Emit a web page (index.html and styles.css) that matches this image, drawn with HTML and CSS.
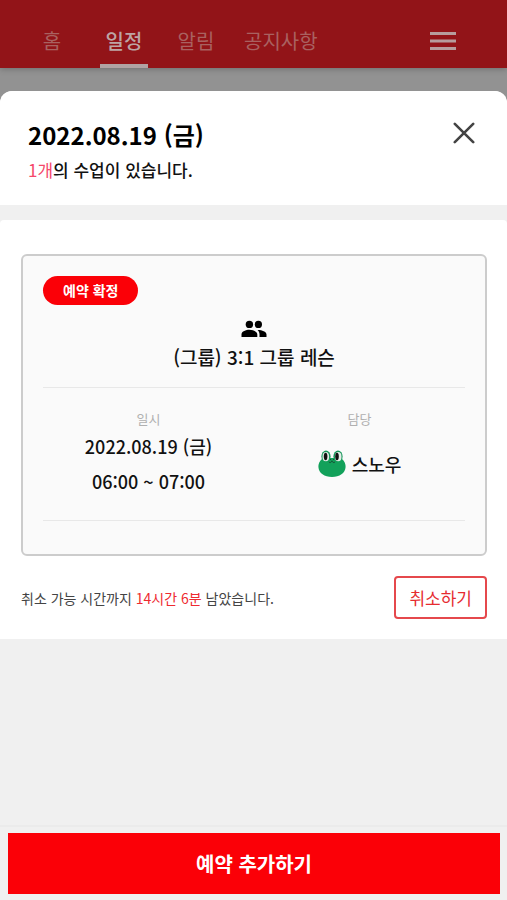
FILE: index.html
```html
<!DOCTYPE html>
<html lang="ko">
<head>
<meta charset="utf-8">
<meta name="viewport" content="width=device-width, initial-scale=1">
<title>일정</title>
<link rel="stylesheet" href="styles.css">
</head>
<body>
<div class="app">
  <header class="topbar">
    <nav class="tabs">
      <a class="tab" href="#home">홈</a>
      <a class="tab tab-active" href="#schedule" aria-current="page">일정</a>
      <a class="tab" href="#alerts">알림</a>
      <a class="tab" href="#notices">공지사항</a>
    </nav>
    <button class="icon-button menu" type="button" aria-label="메뉴">
      <svg width="26" height="18" viewBox="0 0 26 18"><path d="M0 1.5h26M0 9h26M0 16.5h26" stroke="currentColor" stroke-width="2.8"/></svg>
    </button>
  </header>
  <main class="sheet">
    <section class="summary">
      <div>
        <h1 class="date">2022.08.19 (금)</h1>
        <p class="count"><span class="count-number">1개</span>의 수업이 있습니다.</p>
      </div>
      <button class="icon-button close" type="button" aria-label="닫기">
        <svg width="22" height="22" viewBox="0 0 22 22"><path d="M1.8 1.8l18.4 18.4M20.2 1.8l-18.4 18.4" stroke="currentColor" stroke-width="2.6" stroke-linecap="round"/></svg>
      </button>
    </section>
    <section class="lessons">
      <article class="card">
        <span class="badge">예약 확정</span>
        <div class="lesson">
          <svg class="people" width="26" height="18" viewBox="0 0 26 18" fill="currentColor">
            <circle cx="8.4" cy="4.4" r="3.7"/>
            <circle cx="17.4" cy="4.4" r="3.6"/>
            <path d="M0.5 17v-2.6c0-3.1 4.5-4.6 7.9-4.6s7.9 1.5 7.9 4.6V17z"/>
            <path d="M17.2 9.9c3.6.1 8.3 1.5 8.3 4.5V17h-7v-2.6c0-1.9-.6-3.4-1.9-4.5z"/>
          </svg>
          <h2 class="lesson-name">(그룹) 3:1 그룹 레슨</h2>
        </div>
        <dl class="details">
          <div class="detail">
            <dt>일시</dt>
            <dd class="time">2022.08.19 (금)<br>06:00 ~ 07:00</dd>
          </div>
          <div class="detail">
            <dt>담당</dt>
            <dd class="coach">
              <svg width="28" height="28" viewBox="0 0 28 28">
                <ellipse cx="8" cy="6.5" rx="4.6" ry="6" fill="#16955a"/>
                <ellipse cx="20" cy="6.5" rx="4.6" ry="6" fill="#16955a"/>
                <path d="M4 9c3-1.5 17-1.5 20 0 2.6 2.4 3.8 5.200 3.600 8-.4 6.200-6.100 10-13.600 10S.8 23.200.4 17C.2 14.200 1.400 11.400 4 9z" fill="#12a15a"/>
                <ellipse cx="7.800" cy="6.700" rx="3.300" ry="4.600" fill="#e4ece6"/>
                <ellipse cx="20.200" cy="6.700" rx="3.300" ry="4.600" fill="#e4ece6"/>
                <ellipse cx="7.600" cy="6.500" rx="1.800" ry="3.700" fill="#111"/>
                <ellipse cx="19" cy="6.500" rx="1.800" ry="3.700" fill="#111"/>
                <path d="M10.800 11.800c1.400 1.600 2.700.3 3.100-1 .5 1.300 1.800 2.600 3.200 1M12 9.500h1M15 9.500h1" fill="none" stroke="#174f35" stroke-width="1"/>
              </svg>
              <span>스노우</span>
            </dd>
          </div>
        </dl>
      </article>
      <div class="cancel-row">
        <p class="deadline">취소 가능 시간까지 <span class="deadline-time">14시간 6분</span> 남았습니다.</p>
        <button class="cancel" type="button">취소하기</button>
      </div>
    </section>
  </main>
  <footer class="bottom">
    <button class="add" type="button">예약 추가하기</button>
  </footer>
</div>
</body>
</html>
```
FILE: styles.css
```css
* {
  box-sizing: border-box;
}

body,
h1,
h2,
p,
dl,
dd {
  margin: 0;
}

body {
  background: #929292;
  color: #111;
  font-family: "Noto Sans CJK KR", "Noto Sans", sans-serif;
}

button {
  font: inherit;
  cursor: pointer;
}

svg {
  display: block;
}

.app {
  display: flex;
  flex-direction: column;
  min-height: 100vh;
}

.topbar {
  display: flex;
  justify-content: space-between;
  height: 68px;
  padding: 0 41px 0 16px;
  background: #921418;
  box-shadow: 0 1px 6px #00000040;
}

.tabs {
  display: flex;
}

.tab {
  display: flex;
  flex-direction: column;
  align-items: center;
  justify-content: flex-end;
  min-width: 72px;
  padding: 0 12px;
  color: #a96160;
  font-size: 20px;
  line-height: 28px;
  text-decoration: none;
}

.tab::after {
  content: "";
  width: 48px;
  height: 4px;
  margin-top: 9px;
}

.tab-active {
  color: #bda5a5;
  font-weight: 500;
}

.tab-active::after {
  background: #b0a3a3;
}

.icon-button {
  padding: 0;
  border: 0;
  background: none;
}

.menu {
  align-self: flex-end;
  padding: 10px;
  margin-bottom: 8px;
  color: #b79c9c;
}

.sheet {
  flex: 1;
  margin-top: 23px;
  border-radius: 12px 12px 0 0;
  background: #f0f0f0;
  overflow: hidden;
}

.summary {
  display: flex;
  justify-content: space-between;
  align-items: flex-start;
  padding: 25px 32px 19px 28px;
  background: #fff;
}

.date {
  color: #000;
  font-size: 24px;
  font-weight: 700;
  line-height: 38px;
}

.count {
  font-size: 17px;
  font-weight: 500;
  line-height: 32px;
}

.count-number {
  color: #f5476a;
  font-weight: 400;
}

.close {
  margin-top: 6px;
  color: #444;
}

.lessons {
  margin-top: 15px;
  padding: 34px 20px 20px;
  border-radius: 4px 4px 0 0;
  background: #fff;
}

.card {
  padding: 20px 20px 33px;
  margin-left: 1px;
  border: 2px solid #ccc;
  border-radius: 6px;
  background: #fafafa;
}

.badge {
  display: inline-block;
  padding: 0 20px;
  border-radius: 15px;
  background: #fb0007;
  color: #fff;
  font-size: 14px;
  font-weight: 700;
  line-height: 29px;
  vertical-align: top;
}

.lesson {
  display: flex;
  flex-direction: column;
  align-items: center;
  padding: 15px 0 11px;
  border-bottom: 1px solid #e8e8e8;
}

.people {
  color: #000;
}

.lesson-name {
  font-size: 19px;
  font-weight: 500;
  line-height: 38px;
}

.details {
  display: grid;
  grid-template-columns: 1fr 1fr;
  padding: 21px 0;
  border-bottom: 1px solid #e8e8e8;
  text-align: center;
}

.detail dt {
  color: #b0b0b0;
  font-size: 13px;
  line-height: 20px;
}

.time {
  font-size: 18px;
  font-weight: 500;
  line-height: 35px;
}

.coach {
  display: flex;
  align-items: center;
  justify-content: center;
  gap: 6px;
  height: 70px;
  font-size: 18px;
  font-weight: 500;
}

.cancel-row {
  display: flex;
  align-items: center;
  justify-content: space-between;
  margin-top: 20px;
}

.deadline {
  padding-left: 1px;
  color: #444;
  font-size: 14px;
  line-height: 22px;
}

.deadline-time {
  color: #ee2a30;
}

.cancel {
  padding: 0 13px;
  border: 2px solid #e5484c;
  border-radius: 4px;
  background: #fff;
  color: #e62b30;
  font-size: 17px;
  line-height: 39px;
}

.bottom {
  padding: 6px 7px 6px 8px;
  border-top: 2px solid #ebebeb;
  background: #f0f0f0;
}

.add {
  display: block;
  width: 100%;
  padding: 0;
  border: 0;
  background: #fb0007;
  color: #fff;
  font-size: 20px;
  font-weight: 700;
  line-height: 61px;
}
```
